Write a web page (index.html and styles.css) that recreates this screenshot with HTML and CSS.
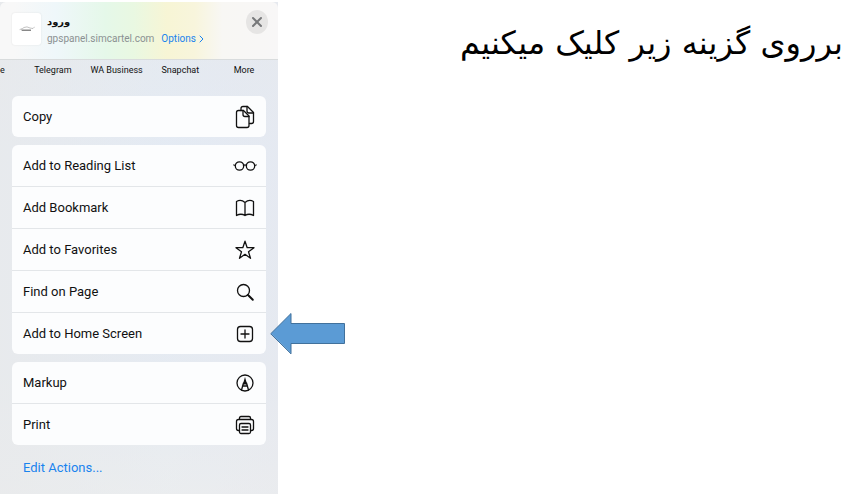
FILE: index.html
```
<!DOCTYPE html>
<html lang="fa">

<head>
  <meta charset="UTF-8">
  <meta name="viewport" content="width=device-width, initial-scale=1.0">
  <title>ورود</title>
  <link rel="stylesheet" href="styles.css">
</head>

<body>
  <div class="container">
    <section class="sheet" lang="en">
      <header class="header">
        <div class="thumb">
          <svg width="16" height="8" viewBox="0 0 16 8">
            <path d="M1 4.500Q4 3.500 5 2.500Q8 1 11 3L14 3.500L15.500 2" fill="none" stroke="#999" stroke-width="0.6" />
            <path d="M2 4.500H12V6H3Z" fill="#888" stroke="none" />
          </svg>
        </div>
        <div class="info">
          <h2 class="title" lang="fa">ورود</h2>
          <p class="link">
            <span>gpspanel.simcartel.com</span>
            <a class="options" href="#options">Options
              <svg width="5" height="8" viewBox="0 0 5 8"><path d="M1 1L4 4L1 7" /></svg>
            </a>
          </p>
        </div>
        <button class="close" type="button" aria-label="Close">
          <svg width="12" height="12" viewBox="0 0 12 12"><path d="M2 2L10 10M10 2L2 10" /></svg>
        </button>
      </header>

      <ul class="apps">
        <li class="app-cut">e</li>
        <li>Telegram</li>
        <li>WA Business</li>
        <li>Snapchat</li>
        <li>More</li>
      </ul>

      <div class="actions">
        <ul class="group">
          <li class="item">
            <button class="action" type="button">Copy
              <svg class="icon" viewBox="0 0 24 24">
                <path d="M8 5.500V3.500Q8 1.500 10 1.500H14.500L20.500 7.500V16.500Q20.500 18.500 18.500 18.500H16.500" />
                <path d="M14 1.500V6Q14 8 16 8H20.500" />
                <path d="M5.500 5.500H10.500L16 11V20.500Q16 22.500 14 22.500H5.500Q3.500 22.500 3.500 20.500V7.500Q3.500 5.500 5.500 5.500Z" />
                <path d="M10 5.500V9.500Q10 11.500 12 11.500H16" />
              </svg>
            </button>
          </li>
        </ul>

        <ul class="group">
          <li class="item">
            <button class="action" type="button">Add to Reading List
              <svg class="icon" viewBox="0 0 24 24">
                <circle cx="6.500" cy="12" r="4.200" />
                <circle cx="17.500" cy="12" r="4.200" />
                <path d="M10.500 11.500Q12 10.300 13.500 11.500M2.300 11.500L0.800 11M21.700 11.500L23.200 11" />
              </svg>
            </button>
          </li>
          <li class="item">
            <button class="action" type="button">Add Bookmark
              <svg class="icon" viewBox="0 0 24 24">
                <path d="M12 6.500Q8 3 3.500 5.500V19.500Q8 17 12 19.500Q16 17 20.500 19.500V5.500Q16 3 12 6.500ZM12 6.500V19.500" />
              </svg>
            </button>
          </li>
          <li class="item">
            <button class="action" type="button">Add to Favorites
              <svg class="icon" viewBox="0 0 24 24">
                <path d="M12 3.200L14.200 9.700H21L15.500 13.700L17.500 20.300L12 16.300L6.500 20.300L8.500 13.700L3 9.700H9.800Z" />
              </svg>
            </button>
          </li>
          <li class="item">
            <button class="action" type="button">Find on Page
              <svg class="icon" viewBox="0 0 24 24">
                <circle cx="10.500" cy="10.500" r="6" />
                <path class="thick" d="M15 15L19.800 19.800" />
              </svg>
            </button>
          </li>
          <li class="item">
            <button class="action" type="button">Add to Home Screen
              <svg class="icon" viewBox="0 0 24 24">
                <rect x="4.500" y="4.500" width="15" height="15" rx="3" />
                <path d="M12 8V16M8 12H16" />
              </svg>
            </button>
            <svg class="arrow" width="76" height="42" viewBox="0 0 76 42">
              <path d="M1 20.500L21 0.500V10.500H74.500V30.500H21V40.500Z" />
            </svg>
          </li>
        </ul>

        <ul class="group">
          <li class="item">
            <button class="action" type="button">Markup
              <svg class="icon" viewBox="0 0 24 24">
                <circle cx="12" cy="12" r="8" />
                <path d="M8.500 19L10.500 12M13.500 12L15.500 19M9.500 15H14.500" />
                <path class="solid" d="M12 6L14.200 13.500H9.800Z" />
              </svg>
            </button>
          </li>
          <li class="item">
            <button class="action" type="button">Print
              <svg class="icon" viewBox="0 0 24 24">
                <path d="M6.500 6V5Q6.500 3.500 8 3.500H16Q17.500 3.500 17.500 5V6" />
                <path d="M6.500 17.500H5.500Q3.500 17.500 3.500 15.500V8.500Q3.500 6.500 5.500 6.500H18.500Q20.500 6.500 20.500 8.500V15.500Q20.500 17.500 18.500 17.500H17.500" />
                <rect x="6.500" y="10.500" width="11" height="10" rx="1.500" />
                <path d="M9 14H15M9 17H15" />
              </svg>
            </button>
          </li>
        </ul>

        <a class="edit" href="#edit">Edit Actions...</a>
      </div>
    </section>

    <main class="note">
      <h1 class="note-title" dir="rtl">برروی گزینه زیر کلیک میکنیم</h1>
    </main>
  </div>
</body>

</html>
```
FILE: styles.css
```
* {
  box-sizing: border-box;
}

body {
  margin: 0;
  background: #fff;
  color: #111;
  font-family: Roboto, "DejaVu Sans", sans-serif;
}

h1,
h2,
p,
ul {
  margin: 0;
  padding: 0;
}

ul {
  list-style: none;
}

a {
  color: #1a83ee;
  text-decoration: none;
}

button {
  border: 0;
  padding: 0;
  font: inherit;
  color: inherit;
  cursor: pointer;
}

svg {
  display: block;
  fill: none;
  stroke: currentColor;
  stroke-linecap: round;
  stroke-linejoin: round;
}

.container {
  display: flex;
  min-height: 100vh;
  padding-top: 2px;
}

.sheet {
  flex: none;
  width: 32.5%;
  min-width: 270px;
  background: linear-gradient(90deg, rgba(232, 234, 236, .8), rgba(228, 236, 245, .3) 60%, rgba(230, 233, 240, .5)), linear-gradient(#e6e9ed, #e4eaf3 30%, #e6eaf0 75%, #eeeeed);
}

.header {
  display: flex;
  align-items: flex-start;
  height: 58px;
  padding: 8px 10px 0 12px;
  border-bottom: 1px solid #d9dcdd;
  border-radius: 6px 6px 0 0;
  background: linear-gradient(90deg, #f8f8f8 5%, #eff7fa 20%, #e5f8e9 38%, #e9f8e2 48%, #f7f5d5 60%, #f8f5dc 70%, #f8f7f4 80%, #f8f7f7);
}

.thumb {
  display: flex;
  align-items: center;
  justify-content: center;
  width: 29px;
  height: 32px;
  margin-top: 3px;
  border-radius: 3px;
  background: #fff;
  box-shadow: 0 0 2px rgba(0, 0, 0, .1);
}

.info {
  flex: 1;
  padding: 4px 0 0 6px;
}

.title {
  font: bold 10px/16px "DejaVu Sans", sans-serif;
}

.link {
  display: flex;
  gap: 7px;
  font-size: 10px;
  line-height: 17px;
  color: #8b9192;
  white-space: nowrap;
}

.options {
  display: flex;
  align-items: center;
  gap: 3px;
}

.close {
  display: flex;
  align-items: center;
  justify-content: center;
  width: 22px;
  height: 24px;
  border-radius: 50%;
  background: #e6e5e4;
  color: #77787a;
}

.close svg {
  stroke-width: 2;
}

.apps {
  display: grid;
  grid-template-columns: 21px repeat(4, 1fr);
  padding: 4px 2px 0 0;
  font-size: 9px;
  line-height: 12px;
  text-align: center;
  white-space: nowrap;
}

.app-cut {
  text-align: left;
}

.actions {
  display: flex;
  flex-direction: column;
  gap: 8px;
  padding: 20px 12px 16px;
  font-size: 13px;
}

.group {
  border-radius: 6px;
  background: #fcfdfe;
}

.item {
  position: relative;
}

.item + .item {
  border-top: 1px solid #e3e6e9;
}

.action {
  display: flex;
  align-items: center;
  justify-content: space-between;
  width: 100%;
  height: 41px;
  padding: 0 9px 0 11px;
  background: none;
}

.icon {
  width: 24px;
  height: 24px;
  stroke-width: 1.3;
}

.thick {
  stroke-width: 2;
}

.solid {
  fill: currentColor;
  stroke: none;
}

.arrow {
  position: absolute;
  top: 0;
  left: calc(100% + 4px);
  z-index: 1;
  fill: #5b9bd5;
  stroke: #41719c;
  stroke-linejoin: miter;
}

.edit {
  align-self: flex-start;
  padding: 7px 11px;
}

.note {
  flex: 1;
  padding: 18px 12px 0;
}

.note-title {
  font: 32px/46px "DejaVu Sans", sans-serif;
  color: #000;
  white-space: nowrap;
}
```
